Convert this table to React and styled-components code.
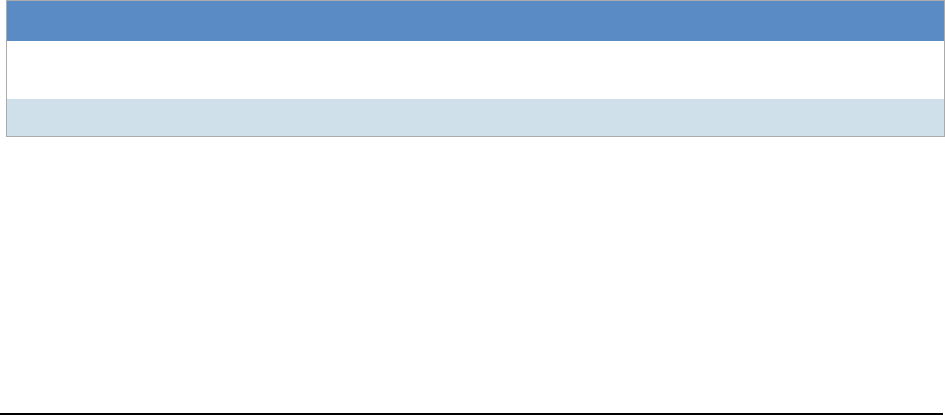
import React from "react";
import styled, { createGlobalStyle } from "styled-components";

const GlobalStyle = createGlobalStyle`
  html, body {
    margin: 0;
    padding: 0;
    background: #ffffff;
    font-family: "Liberation Sans", Arial, sans-serif;
  }
`;

const Page = styled.div`
  height: 415px;
  display: flex;
  flex-direction: column;
  justify-content: space-between;
  box-sizing: border-box;
`;

const TableWrap = styled.div`
  padding-left: 6px;
`;

const Table = styled.table`
  width: 939px;
  border-collapse: collapse;
  border: 1px solid #ababab;
  table-layout: fixed;
`;

const Row = styled.tr`
  height: ${props => props.height}px;
  background: ${props => props.bg};
`;

const Cell = styled.td`
  padding: 0;
  font-size: 13px;
  color: #333;
`;

const Footer = styled.div`
  width: 943px;
  border-bottom: 2px solid #000000;
  height: 0;
`;

const rows = [
  { height: 40, bg: "#5b8bc4" },
  { height: 58, bg: "#ffffff" },
  { height: 38, bg: "#d0e0ea" },
];

export default function App() {
  return (
    <>
      <GlobalStyle />
      <Page>
        <TableWrap>
          <Table>
            <tbody>
              {rows.map((r, i) => (
                <Row key={i} height={r.height} bg={r.bg}>
                  <Cell />
                </Row>
              ))}
            </tbody>
          </Table>
        </TableWrap>
        <Footer />
      </Page>
    </>
  );
}
